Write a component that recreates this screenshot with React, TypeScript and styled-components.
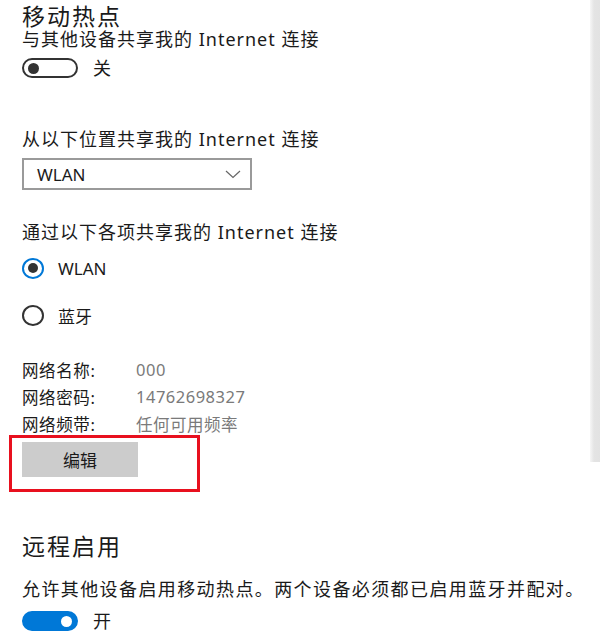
import React from "react";
import styled, { createGlobalStyle } from "styled-components";

const GlobalStyle = createGlobalStyle`
  html, body {
    margin: 0;
    padding: 0;
    background: #ffffff;
  }
  body {
    font-family: "Noto Sans", "Noto Sans CJK SC", sans-serif;
    color: #1a1a1a;
  }
`;

const Page = styled.div`
  display: flex;
  width: 600px;
  height: 637px;
  overflow: hidden;
`;

const Content = styled.div`
  flex: 1;
  display: flex;
  flex-direction: column;
  align-items: flex-start;
  padding-left: 22px;
  padding-top: 4px;
`;

const ScrollTrack = styled.div`
  width: 10px;
  height: 462px;
  background: linear-gradient(to right, #f6f6f6, #e4e4e4 40%, #e2e2e2);
`;

const Title = styled.h1<{ $top?: number }>`
  margin: ${(p) => p.$top ?? 0}px 0 0;
  font-size: 23px;
  line-height: 24px;
  font-weight: 400;
  letter-spacing: 2px;
`;

const Label = styled.div<{ $top: number; $spacing?: number }>`
  margin-top: ${(p) => p.$top}px;
  font-size: 18px;
  line-height: 22px;
  letter-spacing: ${(p) => p.$spacing ?? 1}px;
  white-space: nowrap;
`;

const ToggleRow = styled.div<{ $top: number }>`
  margin-top: ${(p) => p.$top}px;
  display: flex;
  align-items: center;
  gap: 15px;
  height: 20px;
`;

const Track = styled.div<{ $on: boolean }>`
  box-sizing: border-box;
  width: 56px;
  height: 20px;
  border-radius: 10px;
  border: 2px solid ${(p) => (p.$on ? "#0078d7" : "#333333")};
  background: ${(p) => (p.$on ? "#0078d7" : "#ffffff")};
  display: flex;
  align-items: center;
  justify-content: ${(p) => (p.$on ? "flex-end" : "flex-start")};
  padding: 0 4px;
`;

const Knob = styled.div<{ $on: boolean }>`
  width: 11px;
  height: 11px;
  border-radius: 50%;
  background: ${(p) => (p.$on ? "#ffffff" : "#333333")};
`;

const ToggleText = styled.span`
  font-size: 18px;
  line-height: 20px;
`;

const Select = styled.div`
  margin-top: 8px;
  box-sizing: border-box;
  width: 230px;
  height: 32px;
  border: 2px solid #9a9a9a;
  display: flex;
  align-items: center;
  justify-content: space-between;
  padding: 0 9px 0 13px;
  font-size: 17px;
`;

const RadioRow = styled.div<{ $top: number }>`
  margin-top: ${(p) => p.$top}px;
  display: flex;
  align-items: center;
  gap: 14px;
  height: 24px;
  font-size: 17px;
`;

const RadioCircle = styled.div<{ $checked: boolean }>`
  box-sizing: border-box;
  width: 22px;
  height: 21px;
  border-radius: 50%;
  border: 2px solid ${(p) => (p.$checked ? "#0078d7" : "#333333")};
  display: flex;
  align-items: center;
  justify-content: center;
`;

const RadioDot = styled.div`
  width: 10px;
  height: 10px;
  border-radius: 50%;
  background: #333333;
`;

const InfoList = styled.div`
  margin-top: 29px;
  display: grid;
  grid-template-columns: 114px auto;
  grid-auto-rows: 27px;
  align-items: center;
  font-size: 16.5px;
`;

const InfoKey = styled.span`
  color: #1a1a1a;
  letter-spacing: 0.6px;
`;

const InfoValue = styled.span`
  color: #7a7a7a;
  letter-spacing: 0.5px;
`;

const Highlight = styled.div`
  margin: -2px 0 0 -13px;
  box-sizing: border-box;
  width: 191px;
  height: 57px;
  border: 3px solid #e8101e;
  padding: 4px 0 0 10px;
`;

const EditButton = styled.button`
  width: 116px;
  height: 35px;
  border: none;
  background: #cccccc;
  font-family: inherit;
  font-size: 17px;
  color: #1a1a1a;
  padding: 0;
`;

const Chevron = () => (
  <svg width="16" height="9" viewBox="0 0 16 9">
    <path d="M1 1 L8 7.5 L15 1" fill="none" stroke="#666" strokeWidth="1.2" />
  </svg>
);

const Toggle = ({ on, top }: { on: boolean; top: number }) => (
  <ToggleRow $top={top}>
    <Track $on={on}>
      <Knob $on={on} />
    </Track>
    <ToggleText>{on ? "开" : "关"}</ToggleText>
  </ToggleRow>
);

const Radio = ({ checked, label, top }: { checked: boolean; label: string; top: number }) => (
  <RadioRow $top={top}>
    <RadioCircle $checked={checked}>{checked && <RadioDot />}</RadioCircle>
    <span>{label}</span>
  </RadioRow>
);

const info = [
  ["网络名称:", "000"],
  ["网络密码:", "14762698327"],
  ["网络频带:", "任何可用频率"],
];

const App = () => {
  return (
    <Page>
      <GlobalStyle />
      <Content>
        <Title>移动热点</Title>
        <Label $top={0}>与其他设备共享我的 Internet 连接</Label>
        <Toggle on={false} top={8} />

        <Label $top={50}>从以下位置共享我的 Internet 连接</Label>
        <Select>
          <span>WLAN</span>
          <Chevron />
        </Select>

        <Label $top={31}>通过以下各项共享我的 Internet 连接</Label>
        <Radio checked label="WLAN" top={13} />
        <Radio checked={false} label="蓝牙" top={23} />

        <InfoList>
          {info.map(([k, v]) => (
            <React.Fragment key={k}>
              <InfoKey>{k}</InfoKey>
              <InfoValue>{v}</InfoValue>
            </React.Fragment>
          ))}
        </InfoList>

        <Highlight>
          <EditButton>编辑</EditButton>
        </Highlight>

        <Title $top={42}>远程启用</Title>
        <Label $top={20} $spacing={1.4}>
          允许其他设备启用移动热点。两个设备必须都已启用蓝牙并配对。
        </Label>
        <Toggle on top={11} />
      </Content>
      <ScrollTrack />
    </Page>
  );
};

export default App;
